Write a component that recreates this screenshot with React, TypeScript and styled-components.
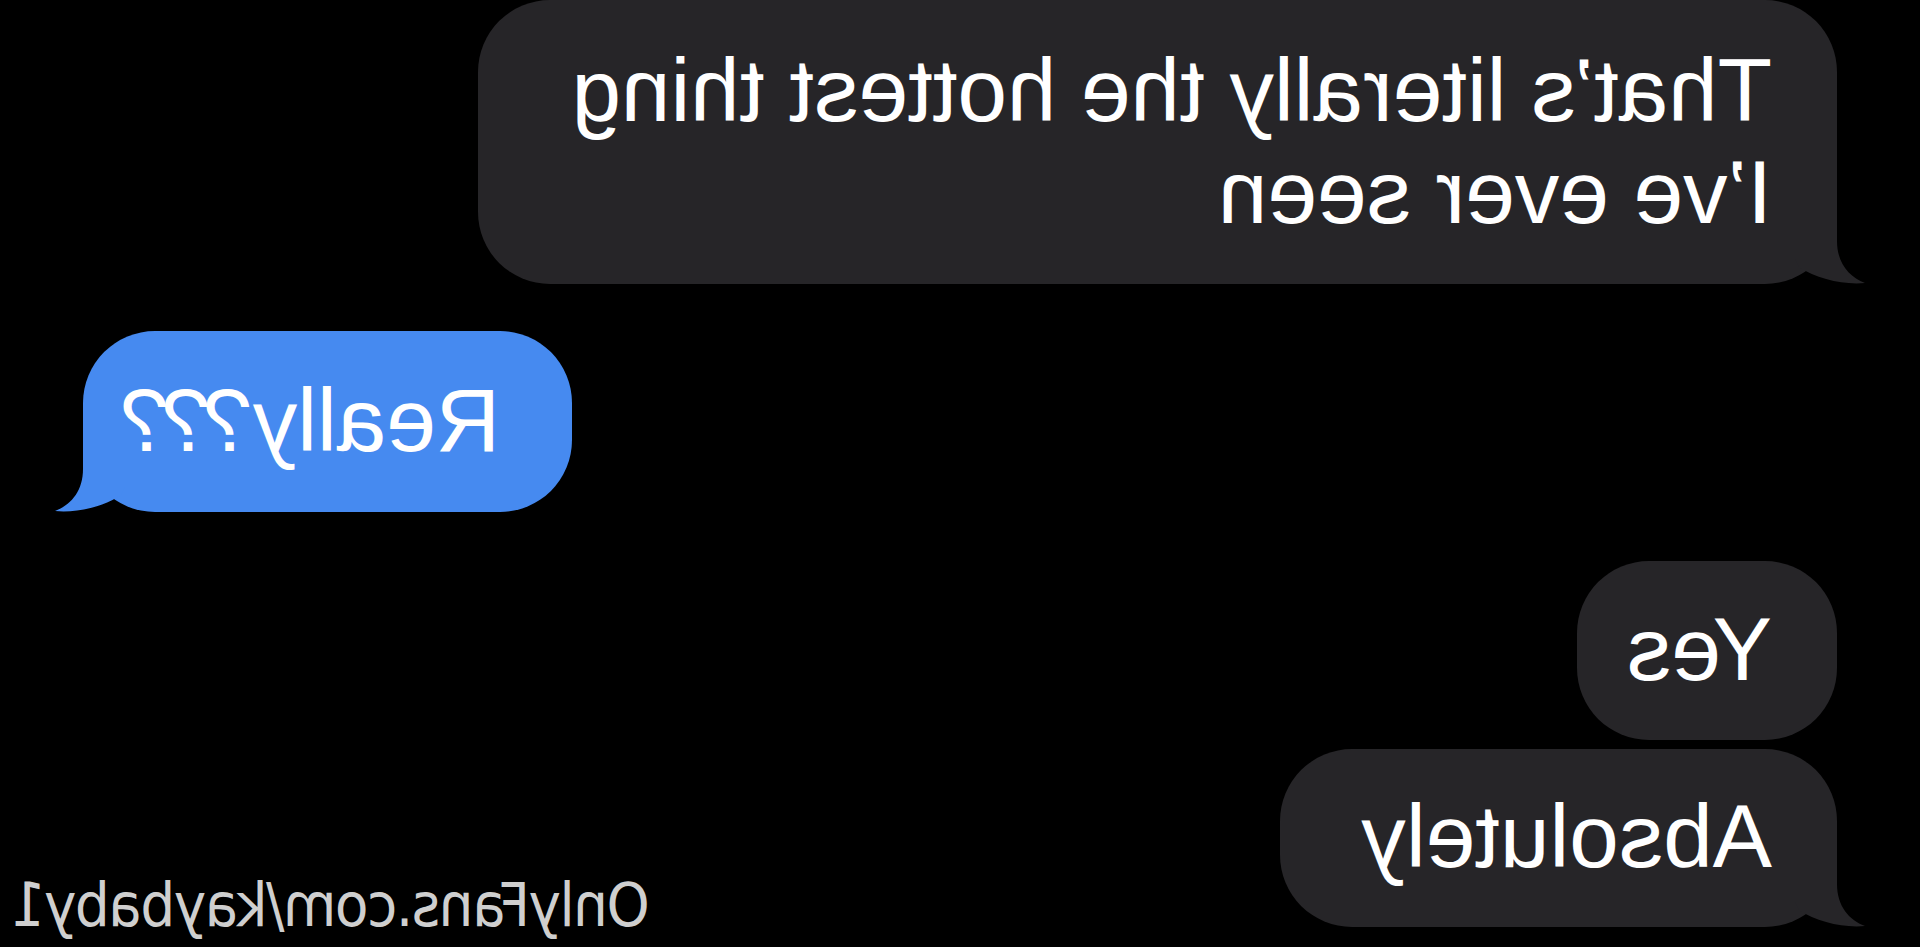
import React from "react";
import styled, { createGlobalStyle } from "styled-components";

const GlobalStyle = createGlobalStyle`
  html, body {
    margin: 0;
    padding: 0;
    background: #000;
  }
  body {
    overflow: hidden;
  }
`;

const GRAY = "#262528";
const BLUE = "#468af0";

const Screen = styled.main`
  position: relative;
  width: 1920px;
  height: 947px;
  box-sizing: border-box;
  padding: 0 83px;
  background: #000;
  overflow: hidden;
  display: flex;
  flex-direction: column;
  transform: scaleX(-1);
  font-family: "Liberation Sans", Arial, sans-serif;
`;

type BubbleProps = {
  $sent?: boolean;
  $w: number;
  $h: number;
  $mt: number;
  $pl: number;
  $pt: number;
};

const Bubble = styled.div<BubbleProps>`
  position: relative;
  align-self: ${(p) => (p.$sent ? "flex-end" : "flex-start")};
  width: ${(p) => p.$w}px;
  height: ${(p) => p.$h}px;
  margin-top: ${(p) => p.$mt}px;
  padding: ${(p) => p.$pt}px 0 0 ${(p) => p.$pl}px;
  box-sizing: border-box;
  border-radius: 72px;
  background: ${(p) => (p.$sent ? BLUE : GRAY)};
  color: #fff;
  font-size: 89px;
  line-height: 102px;
  white-space: pre-line;
`;

const Tail = styled.svg<{ $sent?: boolean }>`
  position: absolute;
  bottom: 0;
  ${(p) => (p.$sent ? "right: -28px; transform: scaleX(-1);" : "left: -28px;")}
  width: 70px;
  height: 85px;
  display: block;
`;

const Punct = styled.span`
  letter-spacing: -8px;
`;

const Watermark = styled.div`
  position: absolute;
  right: 12px;
  bottom: 12px;
  font-family: "DejaVu Sans", "Liberation Sans", sans-serif;
  font-stretch: condensed;
  font-size: 61px;
  line-height: 1;
  color: #cfcfcf;
  letter-spacing: -1.5px;
`;

function BubbleTail({ sent }: { sent?: boolean }) {
  return (
    <Tail $sent={sent} viewBox="0 0 70 85" aria-hidden="true">
      <path
        d="M28 0 L28 42 C28 64 16 78 0 84 C22 86 48 80 66 68 L70 60 L70 0 Z"
        fill={sent ? BLUE : GRAY}
      />
    </Tail>
  );
}

export default function App() {
  return (
    <>
      <GlobalStyle />
      <Screen>
        <Bubble $w={1359} $h={284} $mt={0} $pl={65} $pt={39}>
          {"That’s literally the hottest thing\nI’ve ever seen"}
          <BubbleTail />
        </Bubble>
        <Bubble $sent $w={489} $h={181} $mt={47} $pl={72} $pt={38}>
          Really<Punct>???</Punct>
          <BubbleTail sent />
        </Bubble>
        <Bubble $w={260} $h={179} $mt={49} $pl={65} $pt={37}>
          Yes
        </Bubble>
        <Bubble $w={557} $h={178} $mt={9} $pl={65} $pt={36}>
          Absolutely
          <BubbleTail />
        </Bubble>
        <Watermark>OnlyFans.com/kaybaby1</Watermark>
      </Screen>
    </>
  );
}
